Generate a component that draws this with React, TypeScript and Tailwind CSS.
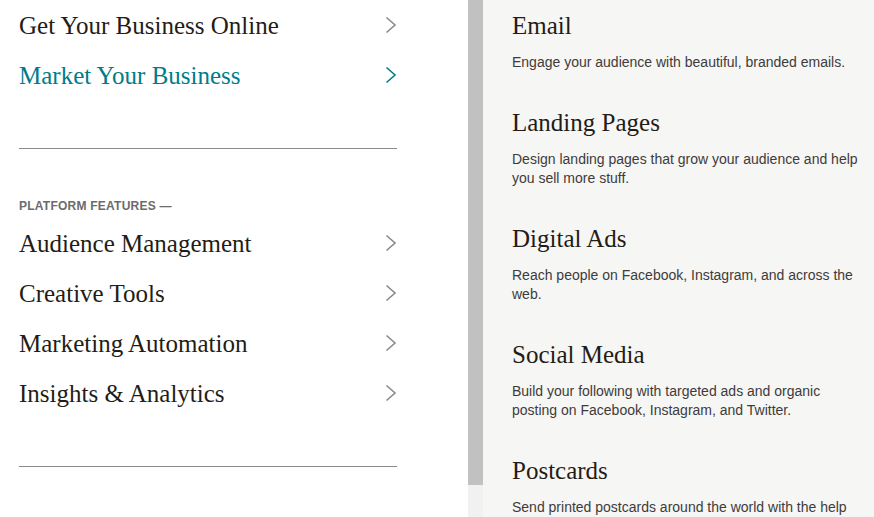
import React from "react";

const serif = "font-['Liberation_Serif','Times_New_Roman',serif]";
const sans = "font-['Liberation_Sans',Arial,sans-serif]";

function Chevron({ active }: { active?: boolean }) {
  return (
    <svg width="12" height="18" viewBox="0 0 12 18" className={active ? "text-[#007c89]" : "text-[#8a8a8a]"}>
      <path d="M1.5 1.5 L10 9 L1.5 16.5" fill="none" stroke="currentColor" strokeWidth="1.6" />
    </svg>
  );
}

function NavRow({ label, active }: { label: string; active?: boolean }) {
  return (
    <div className="flex h-[50px] items-center justify-between">
      <span className={`${serif} text-[25px] leading-none ${active ? "text-[#007c89]" : "text-[#241c15]"}`}>{label}</span>
      <Chevron active={active} />
    </div>
  );
}

const items = [
  { t: "Email", d: ["Engage your audience with beautiful, branded emails."] },
  { t: "Landing Pages", d: ["Design landing pages that grow your audience and help", "you sell more stuff."] },
  { t: "Digital Ads", d: ["Reach people on Facebook, Instagram, and across the", "web."] },
  { t: "Social Media", d: ["Build your following with targeted ads and organic", "posting on Facebook, Instagram, and Twitter."] },
  { t: "Postcards", d: ["Send printed postcards around the world with the help"] },
];

export default function App() {
  return (
    <div className="flex h-[517px] w-[874px] overflow-hidden bg-white">
      <div className="flex w-[468px] flex-col pl-[19px] pr-[71px]">
        <div>
          <NavRow label="Get Your Business Online" />
          <NavRow label="Market Your Business" active />
        </div>
        <div className="mt-[48px] h-px bg-[#8a8a8a]" />
        <div className={`${sans} mt-[51px] text-[12px] font-semibold uppercase leading-none tracking-[0.02em] text-[#6b6b6b]`}>
          Platform Features —
        </div>
        <div className="mt-[6px]">
          <NavRow label="Audience Management" />
          <NavRow label="Creative Tools" />
          <NavRow label="Marketing Automation" />
          <NavRow label="Insights & Analytics" />
        </div>
        <div className="mt-[48px] h-px bg-[#8a8a8a]" />
      </div>
      <div className="flex w-[15px] flex-col bg-[#f1f1f1]">
        <div className="h-[485px] bg-[#c1c1c1]" />
      </div>
      <div className="flex flex-1 flex-col bg-[#f6f6f4] pl-[29px] pt-[13px]">
        {items.map((it) => (
          <div key={it.t} className="mb-[38px]">
            <div className={`${serif} text-[25px] leading-[26px] text-[#241c15]`}>{it.t}</div>
            <div className={`${sans} mt-[14px] text-[14px] leading-[19px] text-[#403b3b]`}>
              {it.d.map((l) => (
                <div key={l} className="whitespace-nowrap">{l}</div>
              ))}
            </div>
          </div>
        ))}
      </div>
    </div>
  );
}
